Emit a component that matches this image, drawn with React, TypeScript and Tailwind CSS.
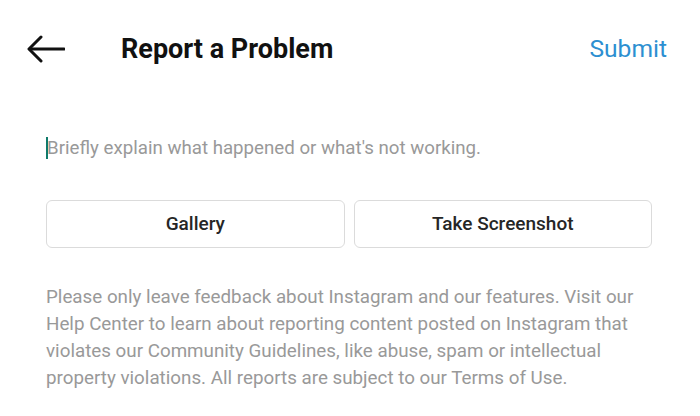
export default function App() {
  return (
    <div className="w-[700px] h-[416px] bg-white overflow-hidden font-['Roboto',sans-serif]">
      {/* Header */}
      <div className="flex items-center h-[98px] pl-[27px] pr-[33px]">
        <svg width="38" height="28" viewBox="0 0 38 28" fill="none" stroke="#111" strokeWidth="3" strokeLinecap="round" strokeLinejoin="round">
          <path d="M37 14H3" />
          <path d="M14 2L2 14l12 12" />
        </svg>
        <h1 className="ml-[56px] text-[27px] font-bold text-[#111]">Report a Problem</h1>
        <button className="ml-auto text-[24.6px] text-[#2d8fd1]">Submit</button>
      </div>

      {/* Input */}
      <div className="mx-[46px] mt-[38px] flex items-center h-[24px]">
        <span className="w-[2px] h-[22px] bg-[#0f7a6a]" />
        <span className="text-[18.7px] text-[#999] -ml-[1px]">Briefly explain what happened or what's not working.</span>
      </div>

      {/* Buttons */}
      <div className="ml-[46px] mr-[48px] mt-[40px] grid grid-cols-2 gap-[9px]">
        <button className="h-[48px] rounded-[6px] border border-[#dbdbdb] text-[19px] font-medium text-[#262626]">Gallery</button>
        <button className="h-[48px] rounded-[6px] border border-[#dbdbdb] text-[19px] font-medium text-[#262626]">Take Screenshot</button>
      </div>

      {/* Info */}
      <p className="mx-[46px] mt-[36px] text-[18.8px] leading-[27px] text-[#999]">
        Please only leave feedback about Instagram and our features. Visit our Help Center to learn about reporting content posted on Instagram that violates our Community Guidelines, like abuse, spam or intellectual property violations. All reports are subject to our Terms of Use.
      </p>
    </div>
  );
}
